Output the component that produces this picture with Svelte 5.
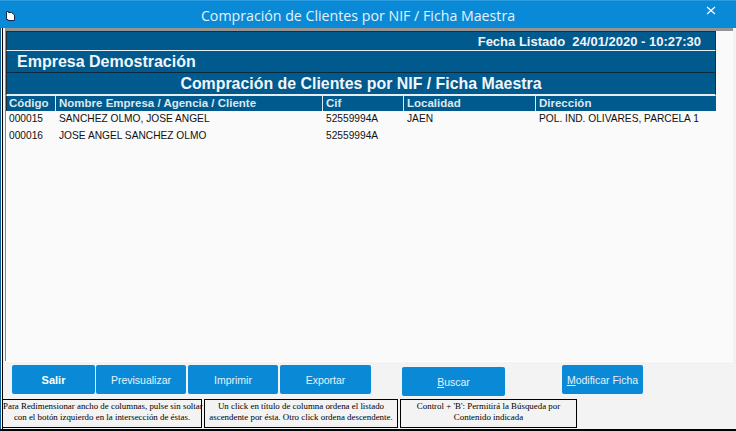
<script>
	const columns = [
		{ label: 'Código', width: 49 },
		{ label: 'Nombre Empresa / Agencia / Cliente', width: 267 },
		{ label: 'Cif', width: 81 },
		{ label: 'Localidad', width: 132 },
		{ label: 'Dirección', width: 181 }
	];
	const rows = [
		['000015', 'SANCHEZ OLMO, JOSE ANGEL', '52559994A', 'JAEN', 'POL. IND. OLIVARES, PARCELA 1'],
		['000016', 'JOSE ANGEL SANCHEZ OLMO', '52559994A', '', '']
	];
</script>

<div class="window">
	<header class="titlebar">
		<svg class="app-icon" width="10" height="10" viewBox="0 0 10 10" aria-hidden="true">
			<path d="M0.5 0.5h2v1h3l3 2.5v5.5H2v-1H0.5z" fill="#fff" stroke="#13294a" stroke-width="1" />
		</svg>
		<span class="title">Compración de Clientes por NIF / Ficha Maestra</span>
		<svg class="close" width="10" height="9" viewBox="0 0 10 9" aria-hidden="true">
			<path d="M1 1l8 7M9 1L1 8" stroke="#fff" stroke-width="1.2" fill="none" />
		</svg>
	</header>

	<div class="body">
		<div class="canvas">
			<section class="report">
				<div class="band date"><span>Fecha Listado&nbsp; 24/01/2020 - 10:27:30</span></div>
				<div class="band company">Empresa Demostración</div>
				<div class="band heading">Compración de Clientes por NIF / Ficha Maestra</div>
				<div class="thead">
					{#each columns as col}
						<div class="th" style="width:{col.width}px">{col.label}</div>
					{/each}
				</div>
				<div class="tbody">
					{#each rows as row}
						<div class="tr">
							{#each row as cell, i}
								<div class="td" style="width:{columns[i].width}px">{cell}</div>
							{/each}
						</div>
					{/each}
				</div>
			</section>
		</div>

		<div class="actions">
			<div class="btn-group">
				<button class="btn strong w83">Salir</button>
				<button class="btn w90">Previsualizar</button>
				<button class="btn w90">Imprimir</button>
				<button class="btn w91">Exportar</button>
			</div>
			<button class="btn search"><u>B</u>uscar</button>
			<button class="btn edit"><u>M</u>odificar Ficha</button>
		</div>

		<div class="hints">
			<div class="hint h1">Para Redimensionar ancho de columnas, pulse sin soltar<br />con el botón izquierdo en la intersección de éstas.</div>
			<div class="hint h2">Un click en título de columna ordena el listado<br />ascendente por ésta. Otro click ordena descendente.</div>
			<div class="hint h3">Control + 'B': Permitirá la Búsqueda por<br />Contenido indicada</div>
		</div>
	</div>
</div>

<style>
:global(body) { margin: 0; background: #f3f3f3; }
.window {
	width: 736px;
	height: 431px;
	display: flex;
	flex-direction: column;
	overflow: hidden;
	font-family: "Liberation Sans", Arial, sans-serif;
}
.titlebar {
	height: 28px;
	flex: none;
	display: flex;
	align-items: center;
	justify-content: space-between;
	box-sizing: border-box;
	padding: 3px 20px 0 6px;
	background: #0a8ad6;
	border-top: 1px solid #2b9de0;
	color: #e3f2fb;
}
.title { font-family: "Open Sans", sans-serif; font-size: 14.2px; margin-top: -2px; margin-left: -6px; }
.close { margin-top: -11px; }
.body {
	flex: 1;
	display: flex;
	flex-direction: column;
	box-sizing: border-box;
	border-bottom: 2px solid #000;
	min-height: 0;
	padding-left: 5px;
	background: linear-gradient(to right, #0a5f9a 0, #0a5f9a 1px, #fff 1px, #fff 2px, #000 2px, #000 3px, #f3f3f3 3px);
}
.canvas {
	width: 728px;
	height: 333px;
	flex: none;
	box-sizing: border-box;
	border-top: 3px solid #949494;
	border-left: 1px solid #8a8a8a;
	background: #fafafa;
}
.report {
	width: 710px;
	height: 100%;
	display: flex;
	flex-direction: column;
	box-sizing: border-box;
}
.band {
	background: #015a8e;
	color: #f0f6fa;
	font-weight: bold;
	box-sizing: border-box;
	border-left: 1px solid #1c2c3a;
	border-right: 1px solid #1c2c3a;
}
.date {
	height: 20px;
	font-size: 13px;
	line-height: 19px;
	text-align: right;
	padding-right: 14px;
	border-top: 1px solid #1c2c3a;
	border-bottom: 1px solid #e6eef3;
}
.company {
	height: 22px;
	font-size: 16px;
	line-height: 21px;
	padding-left: 10px;
	border-bottom: 1px solid #0c2a40;
}
.heading {
	height: 23px;
	font-size: 15.9px;
	line-height: 21px;
	text-align: center;
	border-bottom: 2px solid #e6eef3;
}
.thead {
	display: flex;
	height: 15px;
	background: #015a8e;
	flex: none;
}
.th {
	box-sizing: border-box;
	padding-left: 3px;
	font-size: 11.5px;
	font-weight: bold;
	line-height: 15px;
	color: #dce9f1;
	border-left: 1px solid #dce9f1;
	white-space: nowrap;
}
.th:first-child { border-left: 1px solid #1c2c3a; padding-left: 2px; }
.tbody { flex: 1; }
.tr { display: flex; height: 17px; }
.td {
	box-sizing: border-box;
	padding-left: 4px;
	font-size: 10.2px;
	line-height: 15px;
	color: #111;
	white-space: nowrap;
}
.td:first-child { padding-left: 3px; }
.actions {
	height: 38px;
	flex: none;
	display: flex;
	align-items: flex-start;
	padding: 3px 0 0 7px;
	box-sizing: border-box;
	width: 728px;
	border-top: 1px solid #fff;
}
.btn-group { display: flex; gap: 1px; }
.btn {
	height: 29px;
	border: 0;
	border-radius: 2px;
	background: #0a8ad6;
	color: #e4f2fb;
	font-family: "Liberation Sans", Arial, sans-serif;
	font-size: 10.5px;
	padding: 0;
}
.strong { font-weight: bold; font-size: 11px; color: #fff; }
.w83 { width: 83px; }
.w90 { width: 90px; }
.w90 + .w90 { margin-left: 1px; }
.w91 { width: 91px; margin-left: 1px; }
.search { width: 103px; margin: 2px 0 0 31px; }
.edit { width: 81px; margin-left: 57px; }
.hints { display: flex; gap: 2px; margin-left: -3px; }
.hint {
	box-sizing: border-box;
	height: 29px;
	border: 1px solid #000;
	font-family: "Liberation Serif", serif;
	font-size: 8.9px;
	line-height: 11px;
	text-align: center;
	padding-top: 1px;
	color: #000;
	white-space: nowrap;
}
.h1 { width: 200px; }
.h2 { width: 194px; }
.h3 { width: 177px; }
</style>
